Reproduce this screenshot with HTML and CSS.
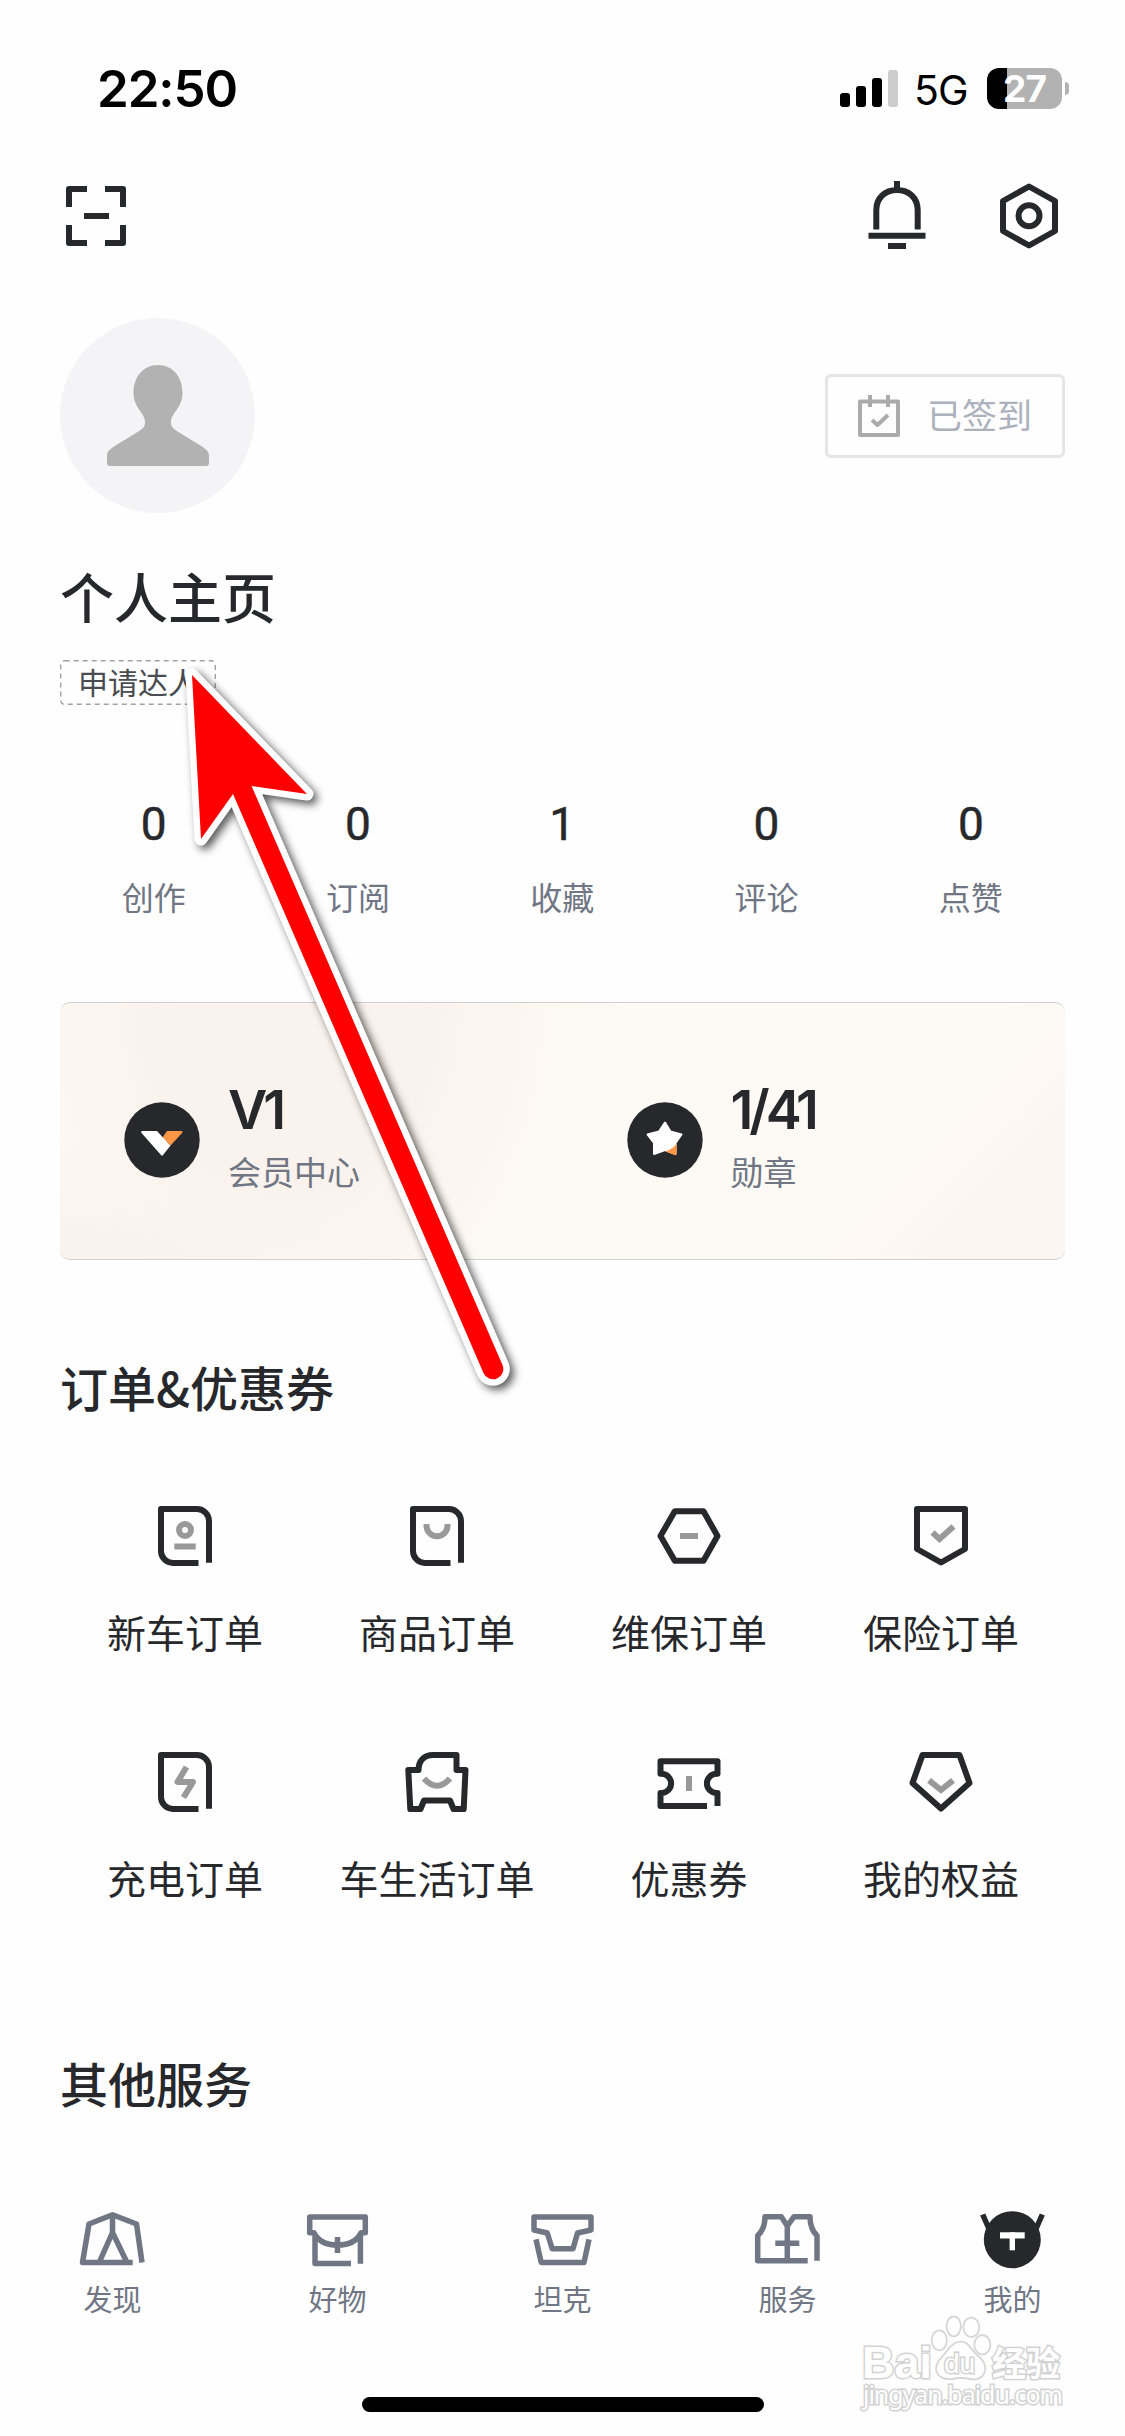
FILE: index.html
```html
<!DOCTYPE html>
<html lang="zh-CN">
<head>
<meta charset="utf-8">
<title>我的</title>
<link rel="stylesheet" href="styles.css">
</head>
<body>
<div class="screen">
  <header class="status">
    <span class="time">22:50</span>
    <div class="status-right">
      <div class="signal"><i class="bar b1"></i><i class="bar b2"></i><i class="bar b3"></i><i class="bar b4"></i></div>
      <span class="network">5G</span>
      <div class="battery"><span class="level">27</span></div>
      <i class="battery-cap"></i>
    </div>
  </header>

  <nav class="toolbar">
    <svg class="line-icon" width="60" height="60" viewBox="0 0 60 60"><path d="M3 21V3H21M39 3H57V21M57 39V57H39M21 57H3V39M18 30H43"/></svg>
    <div class="toolbar-right">
      <svg class="line-icon" width="60" height="70" viewBox="0 0 60 70"><path d="M30 0V8M9.300 48.500V29C9.300 17 18 9 30 9S50.700 17 50.700 29V48.500M1.500 54.700H58.500M21 65H39"/></svg>
      <svg class="line-icon" width="60" height="70" viewBox="0 0 60 70"><path d="M30 5.500L56 20V50L30 64.500L4 50V20Z"/><circle cx="30" cy="34.700" r="10.500"/></svg>
    </div>
  </nav>

  <section class="profile">
    <div class="avatar">
      <svg width="102" height="102" viewBox="0 0 102 102"><path fill="#b2b2b2" d="M51 0C66 0 75.500 12 75.500 28C75.500 43 64 48 64 57C64 63 67 64 73 68L91 79C99 84 102 86 102 91V98Q102 101 99 101H3Q0 101 0 98V91C0 86 3 84 11 79L29 68C35 64 38 63 38 57C38 48 26.500 43 26.500 28C26.500 12 36 0 51 0Z"/></svg>
    </div>
    <div class="checkin">
      <svg width="42" height="42" viewBox="0 0 42 42" fill="none" stroke="#ababab" stroke-width="4" stroke-linejoin="round"><path d="M2 6.500H40V40H2ZM12 0V12M30 0V12M14 25L19.500 30L30 20"/></svg>
      <span>已签到</span>
    </div>
  </section>
  <h1 class="name">个人主页</h1>
  <div class="tag">
    <svg class="tag-frame" width="156" height="45" viewBox="0 0 156 45"><rect x=".7" y=".7" width="154.600" height="43.600" rx="4"/></svg>
    <span>申请达人</span>
  </div>

  <section class="stats">
    <div class="stat"><b>0</b><span>创作</span></div>
    <div class="stat"><b>0</b><span>订阅</span></div>
    <div class="stat"><b>1</b><span>收藏</span></div>
    <div class="stat"><b>0</b><span>评论</span></div>
    <div class="stat"><b>0</b><span>点赞</span></div>
  </section>

  <section class="member">
    <div class="member-item">
      <svg width="76" height="76" viewBox="0 0 76 76"><circle cx="38" cy="38" r="37.700" fill="#27282c"/><path fill="#ff9747" d="M43 29H57Q59.500 29 58 31L46.400 43.700L38.500 35.500Z"/><path fill="#fff" d="M18.500 29H33L46.400 43.700L39 53Q38 54.500 37 53L17.500 31Q16.500 29 18.500 29Z"/></svg>
      <div class="member-text"><strong>V1</strong><span>会员中心</span></div>
    </div>
    <div class="member-item">
      <svg width="76" height="76" viewBox="0 0 76 76"><circle cx="38" cy="38" r="37.700" fill="#27282c"/><path fill="#fff" stroke="#fff" stroke-width="2" stroke-linejoin="round" d="M38 20.500L43.500 29.500L54.500 32.500L48.500 41V52L38 48L27 52V41L20.500 32.500L32 29.500Z"/><path fill="#ff9747" d="M49.500 42V52Q49.500 53.500 48 53L38.500 49.500Q46 47 49.500 42Z"/></svg>
      <div class="member-text"><strong>1/41</strong><span>勋章</span></div>
    </div>
  </section>

  <h2 class="heading orders-heading">订单&amp;优惠券</h2>
  <section class="orders">
    <div class="order"><svg class="order-icon" viewBox="0 0 66 66"><path d="M46.500 60H21A12 12 0 0 1 9 48V6H45A12 12 0 0 1 57 18V59.700"/><g class="soft"><circle cx="33" cy="27" r="6"/><path d="M22.300 43.500H43.700"/></g></svg><span>新车订单</span></div>
    <div class="order"><svg class="order-icon" viewBox="0 0 66 66"><path d="M46.500 60H21A12 12 0 0 1 9 48V6H45A12 12 0 0 1 57 18V59.700"/><path class="soft" d="M22.500 21V22.800A10.500 10.500 0 0 0 43.500 22.800V21"/></svg><span>商品订单</span></div>
    <div class="order"><svg class="order-icon" viewBox="0 0 66 66"><path d="M18.800 8.300H47.500L61.500 33L47.500 57.700H18.800L4.500 33Z"/><path class="soft" d="M24 33H42"/></svg><span>维保订单</span></div>
    <div class="order"><svg class="order-icon" viewBox="0 0 66 66"><path d="M9 6H57V46L33 59.500L9 46Z"/><path class="soft sharp" d="M24.500 29.500L31.500 36L45.500 23.500"/></svg><span>保险订单</span></div>
    <div class="order"><svg class="order-icon" viewBox="0 0 66 66"><path d="M46.500 60H21A12 12 0 0 1 9 48V6H45A12 12 0 0 1 57 18V59.700"/><path class="soft" d="M34.500 18L25.500 33H41L31.500 48.500"/></svg><span>充电订单</span></div>
    <div class="order"><svg class="order-icon" viewBox="0 0 66 66"><path d="M4.300 21H14.500C14.500 12 20 6 29 6H52.500V21H61.500L59.700 60H49.500L46 51.500H20L16.500 60H6.300Z"/><path class="soft" d="M20 29.500Q33 44 46 29.500"/></svg><span>车生活订单</span></div>
    <div class="order"><svg class="order-icon" viewBox="0 0 66 66"><path d="M51 57H4.500V44H5.500A9.600 9.600 0 0 0 5.500 24.800H4.500V12.300H61.500V24.800H60.500A9.600 9.600 0 0 0 60.500 44H61.500V57"/><path class="soft" d="M33 27V42"/></svg><span>优惠券</span></div>
    <div class="order"><svg class="order-icon" viewBox="0 0 66 66"><path d="M14.500 6H51.500L61.500 34L33 59.500L4.500 34Z"/><path class="soft sharp" d="M21 31.300L33 41L45 31.300"/></svg><span>我的权益</span></div>
  </section>

  <h2 class="heading services-heading">其他服务</h2>

  <nav class="tabs">
    <div class="tab"><svg class="tab-icon" viewBox="0 0 72 60"><path d="M56.700 53.500H6.500L13 15L36.500 5.800L60.500 15L66 53.500M36.500 5.800V23.500M23.200 53.500L36.500 23.500L51 53.500"/></svg><span>发现</span></div>
    <div class="tab"><svg class="tab-icon" viewBox="0 0 72 60"><path d="M64.300 8V23.700H60C56 32 47 36 36.500 36S17 32 13 23.700H8.700V8ZM14 25V54.500H50M59.400 25V54.700M36.500 28V44"/></svg><span>好物</span></div>
    <div class="tab"><svg class="tab-icon" viewBox="0 0 72 60"><path d="M8 8H65V21L51.500 24L47 39.700H26.200L21.300 24L8 21ZM10 30.300L15.200 53.500H58L63 30.300"/></svg><span>坦克</span></div>
    <div class="tab"><svg class="tab-icon" viewBox="0 0 72 60"><path d="M56.700 51.700H6.700V26.500Q14 20 14 7.700H30.300L36.300 17L43 7.700H59Q59 20 66 26.500V51.700M36.300 17V51.700M24.300 34.300H48.300"/></svg><span>服务</span></div>
    <div class="tab"><svg class="tab-icon" viewBox="0 0 72 60"><g class="me"><path d="M6.700 5.500L13.500 21M66.300 5.500L59.500 21"/><circle cx="36.300" cy="30.700" r="28.500"/><rect x="24" y="23.300" width="24.700" height="6.200"/><rect x="33.600" y="23.300" width="5.400" height="18"/></g></svg><span>我的</span></div>
  </nav>
  <div class="home-bar"></div>

  <svg class="arrow" width="360" height="760" viewBox="170 650 360 760">
    <path d="M192 675L307 794L251.600 786L502.500 1365A10.300 10.300 0 0 1 483.500 1373L233 794L201 839Z"/>
  </svg>

  <svg class="watermark" width="220" height="110" viewBox="855 2305 220 110">
    <g class="paw">
      <ellipse cx="939.300" cy="2340.300" rx="7.600" ry="10"/><ellipse cx="953.700" cy="2326.300" rx="7.200" ry="10"/><ellipse cx="971.300" cy="2327.300" rx="8" ry="9.700"/><ellipse cx="982.300" cy="2344.700" rx="8" ry="9.700"/>
      <path d="M961 2341.700C969 2341.700 971 2350 977 2355C984 2360 986 2366 985 2371C983 2379 976 2380 970 2379Q961 2377 952 2379C944 2380 937 2377 936 2369C936 2361 942 2358 946 2352C950 2346 954 2341.700 961 2341.700Z"/>
    </g>
    <g class="mark">
      <text x="862" y="2378" font-size="45" textLength="70" lengthAdjust="spacingAndGlyphs">Bai</text>
      <text x="944" y="2373" font-size="28" class="du" textLength="31">du</text>
      <text x="992" y="2376" font-size="34">经验</text>
      <text x="863" y="2404" font-size="25" class="url" textLength="200">jingyan.baidu.com</text>
    </g>
  </svg>
</div>
</body>
</html>
```
FILE: styles.css
```css
* { box-sizing: border-box; }
body { margin: 0; background: #fefefe; }
.screen {
  position: relative;
  width: 1125px;
  height: 2436px;
  overflow: hidden;
  background: #fefefe;
  color: #27282c;
  font-family: "Noto Sans CJK SC", sans-serif;
}
svg { display: block; flex: none; }

.status { display: flex; justify-content: space-between; align-items: center; height: 177px; padding: 0 56px 0 97px; color: #000; font-family: Inter, sans-serif; }
.time { font-size: 51px; font-weight: 600; line-height: 60px; letter-spacing: -1.100px; }
.status-right { display: flex; align-items: center; }
.signal { display: flex; align-items: flex-end; gap: 6px; height: 37px; }
.bar { width: 10px; border-radius: 3px; background: #000; }
.b1 { height: 14px; }
.b2 { height: 21px; }
.b3 { height: 29px; }
.b4 { height: 37px; background: #ccc; }
.network { width: 55px; margin: 2px 18px 0 16px; font-size: 41px; line-height: 50px; font-weight: 400; letter-spacing: -1px; }
.battery { width: 75px; height: 41px; border-radius: 12px; background: linear-gradient(90deg, #000 20px, #b2b2b2 20px); text-align: center; }
.level { color: #fff; font-size: 37px; line-height: 41px; font-weight: 700; letter-spacing: -1px; }
.battery-cap { width: 4px; height: 13px; margin-left: 3px; border-radius: 0 4px 4px 0; background: #b2b2b2; }

.toolbar { display: flex; justify-content: space-between; align-items: center; height: 78px; padding: 0 66px; }
.toolbar-right { display: flex; gap: 72px; }
.line-icon { fill: none; stroke: #27282c; stroke-width: 6; stroke-linejoin: round; }

.profile { display: flex; justify-content: space-between; align-items: center; height: 195px; margin: 63px 60px 0; }
.avatar { display: flex; justify-content: center; align-items: center; width: 195px; height: 195px; border-radius: 50%; background: #f4f4f6; }
.checkin { display: flex; align-items: center; gap: 27px; width: 240px; height: 84px; padding-left: 30px; border: 3px solid #e5e5e5; border-radius: 6px; color: #adb1bd; font-size: 35px; line-height: 50px; }
.checkin span { margin-bottom: 3px; }
.name { margin: 53px 60px 0; font-size: 54px; line-height: 60px; font-weight: 500; }
.tag { position: relative; width: 156px; height: 45px; margin: 34px 60px 0; color: #494c50; font-size: 30px; line-height: 42px; text-align: center; }
.tag-frame { position: absolute; left: 0; top: 0; fill: none; stroke: #a2a2a2; stroke-width: 1.400; stroke-dasharray: 5 4; }

.stats { display: flex; margin: 94px 51.500px 0; }
.stat { width: 204.300px; text-align: center; }
.stat b { display: block; font-family: Roboto, sans-serif; font-size: 46px; line-height: 50px; font-weight: 400; -webkit-text-stroke: .5px #27282c; }
.stat span { display: block; margin-top: 27px; color: #707684; font-size: 32px; line-height: 40px; }

.member {
  display: flex;
  height: 258px;
  margin: 86px 60px 0;
  border-top: 1px solid #d2d1cf;
  border-bottom: 1px solid #d2d1cf;
  border-radius: 10px;
  background:
    radial-gradient(ellipse 360px 120px at 0 258px, #faf3ed 20%, rgba(250,243,237,0) 100%),
    radial-gradient(ellipse 330px 420px at 230px 0, #faf2ec 35%, #fbf6f0 65%, rgba(253,250,245,0) 100%),
    linear-gradient(135deg, #fdfaf5 75%, #fcf6f2 90%);
}
.member-item { display: flex; width: 502.500px; padding: 82px 0 0 64px; }
.member-item svg { margin-top: 17px; }
.member-text { margin-left: 28px; }
.member-text strong { display: block; font-family: Inter, sans-serif; font-size: 54px; line-height: 50px; font-weight: 600; letter-spacing: -4px; }
.member-text span { display: block; margin-top: 16px; color: #707684; font-size: 33px; line-height: 40px; }

.heading { margin: 0 60px; font-size: 48px; line-height: 60px; font-weight: 500; }
.orders-heading { margin-top: 96px; }
.orders { display: grid; grid-template-columns: repeat(4, 252px); row-gap: 90px; margin: 87px 0 0 59px; }
.order { display: flex; flex-direction: column; align-items: center; height: 156px; }
.order-icon { width: 66px; height: 66px; fill: none; stroke: #27282c; stroke-width: 6; stroke-linejoin: round; }
.soft { stroke: #999; }
.sharp { stroke-linejoin: miter; }
.order span { margin-top: 37px; font-size: 39px; line-height: 50px; }
.services-heading { margin-top: 147px; }

.tabs { display: flex; margin-top: 97px; }
.tab { display: flex; flex-direction: column; align-items: center; width: 225px; }
.tab-icon { width: 72px; height: 60px; margin-right: 1px; fill: none; stroke: #707684; stroke-width: 5.500; stroke-linejoin: round; }
.me { stroke: #27282c; }
.me circle { fill: #27282c; stroke: none; }
.me rect { fill: #fff; stroke: none; }
.tab span { margin-top: 9px; color: #707684; font-size: 29px; line-height: 40px; }
.home-bar { width: 402px; height: 15px; margin: 79px auto 0; border-radius: 8px; background: #000; }

.arrow { position: absolute; left: 170px; top: 650px; filter: drop-shadow(4px 4px 4px rgba(0,0,0,.65)); }
.arrow path { fill: #f00; stroke: #fff; stroke-width: 13; stroke-linejoin: round; paint-order: stroke; }
.watermark { position: absolute; left: 855px; top: 2305px; }
.paw { fill: #fefefe; stroke: #d6d6d6; stroke-width: 1.800; }
.mark { fill: #fff; stroke: #d2d2d2; stroke-width: 3; paint-order: stroke; font-family: "Liberation Sans", "Noto Sans CJK SC", sans-serif; font-weight: 700; }
.mark .du { font-weight: 400; }
.mark .url { font-family: "Noto Sans", sans-serif; font-weight: 400; }
```
